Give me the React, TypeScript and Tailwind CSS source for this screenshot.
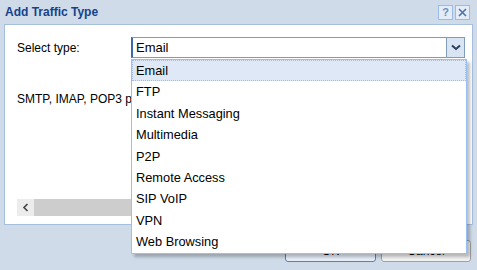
const items = [
  "Email",
  "FTP",
  "Instant Messaging",
  "Multimedia",
  "P2P",
  "Remote Access",
  "SIP VoIP",
  "VPN",
  "Web Browsing",
];

function Chevron() {
  return (
    <svg width="10" height="7" viewBox="0 0 10 7">
      <path d="M1 1.5 L5 5 L9 1.5" fill="none" stroke="#2b3f5c" strokeWidth="2" />
    </svg>
  );
}

export default function App() {
  return (
    <div className="relative w-[477px] h-[270px] overflow-hidden bg-[#cfdbe9] font-['Liberation_Sans',Arial,sans-serif] text-[12px] text-black">
      {/* title bar */}
      <div className="flex items-center justify-between h-[24px] pl-[5px] pr-[7px]">
        <span className="font-bold text-[12px] text-[#15428b]">Add Traffic Type</span>
        <div className="flex gap-[2px]">
          <div className="w-[15px] h-[15px] border border-[#99bbe8] bg-[#e4ecf7] flex items-center justify-center text-[11px] font-bold text-[#6d8fc0] leading-none">?</div>
          <div className="w-[15px] h-[15px] border border-[#99bbe8] bg-[#e4ecf7] flex items-center justify-center">
            <svg width="9" height="9" viewBox="0 0 9 9">
              <path d="M1 1 L8 8 M8 1 L1 8" stroke="#4f73a8" strokeWidth="1.6" />
            </svg>
          </div>
        </div>
      </div>

      {/* body panel */}
      <div className="ml-[4px] mr-[4px] h-[201px] border border-[#a6bfdd] bg-white pt-[12px] pl-[12px]">
        <div className="flex items-center h-[21px]">
          <span className="w-[114px]">Select type:</span>
          <div className="flex h-[21px] w-[334px]">
            <div className="flex-1 flex items-center border border-[#7f9db9] border-l-2 border-l-[#3a6ab0] pl-[3px] text-[13px] bg-white">
              Email
            </div>
            <div className="w-[18px] flex items-center justify-center bg-[#d9e5f3] border border-l-0 border-[#7f9db9]">
              <Chevron />
            </div>
          </div>
        </div>
        {/* description, partly hidden behind the open list */}
        <div className="mt-[32px] w-[114px] overflow-hidden whitespace-nowrap text-[12px]">SMTP, IMAP, POP3 protocols</div>
        <div className="mt-[91px] flex h-[17px] w-[440px]">
          <div className="w-[17px] bg-[#ececec] flex items-center justify-center">
            <svg width="7" height="9" viewBox="0 0 7 9">
              <path d="M5.5 1 L2 4.5 L5.5 8" fill="none" stroke="#444" strokeWidth="1.6" />
            </svg>
          </div>
          <div className="flex-1 bg-[#cdcdcd]" />
        </div>
      </div>

      {/* footer buttons */}
      <div className="flex justify-end gap-[5px] pr-[6px] mt-[15px]">
        <div className="w-[91px] h-[22px] rounded-[3px] border border-[#5a7fb5] bg-[#e5edf7] flex items-center justify-center">OK</div>
        <div className="w-[90px] h-[22px] rounded-[3px] border border-[#a0a0a0] bg-[#f2f2f2] flex items-center justify-center">Cancel</div>
      </div>

      {/* dropdown list */}
      <div className="absolute left-[131px] top-[59px] w-[336px] bg-white border border-[#98c0f4] shadow-[3px_3px_3px_rgba(0,0,0,0.25)] text-[12.8px]">
        {items.map((item, i) => (
          <div
            key={item}
            className={
              i === 0
                ? "h-[21.4px] flex items-center pl-[3px] bg-[#dfe8f6] border border-dotted border-[#a3bae9]"
                : "h-[21.4px] flex items-center pl-[3px] border border-transparent"
            }
          >
            {item}
          </div>
        ))}
      </div>
    </div>
  );
}
